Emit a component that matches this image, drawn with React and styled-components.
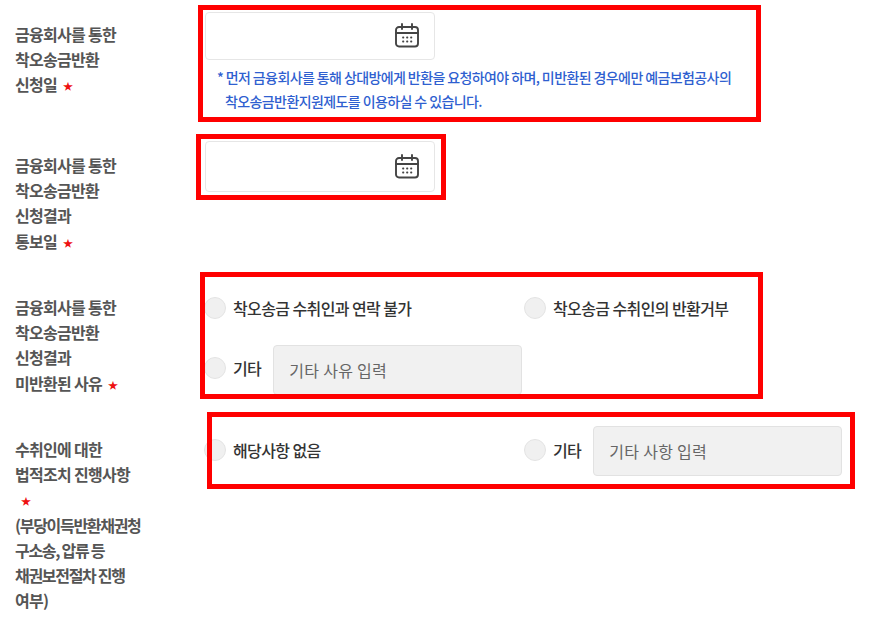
import React from 'react';
import styled, { createGlobalStyle } from 'styled-components';

const GlobalStyle = createGlobalStyle`
    html, body {
        margin: 0;
        padding: 0;
        background: #ffffff;
    }
    body {
        font-family: "Noto Sans CJK KR", "Noto Sans", sans-serif;
    }
`;

const Page = styled.div`
    width: 872px;
    height: 641px;
    overflow: hidden;
    box-sizing: border-box;
    padding-left: 15px;
`;

const Row = styled.div`
    position: relative;
    display: grid;
    grid-template-columns: 190px 1fr;
    height: ${(p) => p.$height}px;
`;

const Label = styled.div`
    width: 128px;
    padding-top: ${(p) => p.$top}px;
    font-size: 16px;
    font-weight: 700;
    line-height: ${(p) => p.$leading || 25.2}px;
    letter-spacing: -0.7px;
    color: #555555;
    word-break: keep-all;
`;

const Line = styled.div`
    white-space: nowrap;
    letter-spacing: ${(p) => (p.$tight ? '-1.3px' : 'inherit')};
`;

const Star = styled.span`
    color: #ee1111;
    font-size: 10px;
    vertical-align: 1px;
    margin-left: ${(p) => p.$left || 6}px;
`;

const Content = styled.div`
    padding-top: ${(p) => p.$top}px;
    display: flex;
    flex-direction: column;
    align-items: flex-start;
`;

const DateBox = styled.div`
    box-sizing: border-box;
    width: ${(p) => p.$width}px;
    height: ${(p) => p.$height}px;
    border: 1px solid #e6e6e6;
    border-radius: 4px;
    display: flex;
    align-items: center;
    justify-content: flex-end;
    padding-right: 14px;
    background: #ffffff;
`;

const Notice = styled.div`
    margin-top: 6px;
    padding-left: 12px;
    font-size: 14px;
    font-weight: 500;
    line-height: 23.5px;
    letter-spacing: -0.6px;
    color: #2f5fd0;
    white-space: nowrap;
`;

const NoticeSecond = styled.div`
    padding-left: 8px;
`;

const Options = styled.div`
    display: grid;
    grid-template-columns: 320px 1fr;
    row-gap: ${(p) => p.$gap || 0}px;
    align-items: start;
    width: 640px;
    margin-left: -1px;
`;

const Option = styled.label`
    display: flex;
    align-items: flex-start;
    height: ${(p) => p.$height || 25}px;
`;

const Radio = styled.span`
    flex: none;
    box-sizing: border-box;
    width: 22px;
    height: 22px;
    border-radius: 50%;
    background: #f0f0f0;
    border: 1px solid #e4e4e4;
    margin-right: 7px;
`;

const OptionText = styled.span`
    font-size: 16px;
    font-weight: 500;
    line-height: 22px;
    letter-spacing: -0.6px;
    color: #333333;
    white-space: nowrap;
`;

const FakeInput = styled.div`
    box-sizing: border-box;
    width: ${(p) => p.$width}px;
    height: 50px;
    margin-left: 12px;
    margin-top: ${(p) => p.$shift}px;
    flex: none;
    padding: 0 15px;
    display: flex;
    align-items: center;
    background: #f1f1f1;
    border: 1px solid #e2e2e2;
    border-radius: 4px;
    font-size: 16px;
    letter-spacing: 0.3px;
    color: #666666;
    white-space: nowrap;
`;

const Highlight = styled.div`
    position: absolute;
    box-sizing: border-box;
    left: ${(p) => p.$left}px;
    top: ${(p) => p.$top}px;
    width: ${(p) => p.$width}px;
    height: ${(p) => p.$height}px;
    border: 5px solid #ff0000;
    pointer-events: none;
`;

const CalendarIcon = () => (
    <svg width="26" height="26" viewBox="0 0 26 26" fill="none" stroke="#444444" strokeWidth="1.9" strokeLinecap="round">
        <rect x="2" y="4" width="22" height="19.5" rx="3" />
        <path d="M2 10H24" />
        <path d="M8 1V6M18 1V6" />
        <path d="M9 14.5H9.4M13 14.5H13.4M17 14.5H17.4M9 18.5H9.4M13 18.5H13.4M17 18.5H17.4" strokeWidth="1.8" />
    </svg>
);

const App = () => (
    <Page>
        <GlobalStyle />
        <Row $height={133}>
            <Label $top={22}>
                <Line>금융회사를 통한</Line>
                <Line>착오송금반환</Line>
                <Line>신청일<Star>★</Star></Line>
            </Label>
            <Content $top={12}>
                <DateBox $width={230} $height={48}><CalendarIcon /></DateBox>
                <Notice>
                    * 먼저 금융회사를 통해 상대방에게 반환을 요청하여야 하며, 미반환된 경우에만 예금보험공사의
                    <NoticeSecond>착오송금반환지원제도를 이용하실 수 있습니다.</NoticeSecond>
                </Notice>
            </Content>
            <Highlight $left={183} $top={5} $width={563} $height={117} />
        </Row>
        <Row $height={142}>
            <Label $top={20}>
                <Line>금융회사를 통한</Line>
                <Line>착오송금반환</Line>
                <Line>신청결과</Line>
                <Line>통보일<Star>★</Star></Line>
            </Label>
            <Content $top={8}>
                <DateBox $width={230} $height={51}><CalendarIcon /></DateBox>
            </Content>
            <Highlight $left={181} $top={1} $width={250} $height={66} />
        </Row>
        <Row $height={142}>
            <Label $top={20}>
                <Line>금융회사를 통한</Line>
                <Line>착오송금반환</Line>
                <Line>신청결과</Line>
                <Line>미반환된 사유<Star>★</Star></Line>
            </Label>
            <Content $top={22}>
                <Options $gap={35}>
                    <Option><Radio /><OptionText>착오송금 수취인과 연락 불가</OptionText></Option>
                    <Option><Radio /><OptionText>착오송금 수취인의 반환거부</OptionText></Option>
                    <Option>
                        <Radio /><OptionText>기타</OptionText>
                        <FakeInput $width={249} $shift={-12}>기타 사유 입력</FakeInput>
                    </Option>
                </Options>
            </Content>
            <Highlight $left={185} $top={-3} $width={563} $height={127} />
        </Row>
        <Row $height={224}>
            <Label $top={20} $leading={25}>
                <Line>수취인에 대한</Line>
                <Line>법적조치 진행사항</Line>
                <Line><Star $left={6}>★</Star></Line>
                <Line $tight>(부당이득반환채권청</Line>
                <Line $tight>구소송, 압류 등</Line>
                <Line $tight>채권보전절차 진행</Line>
                <Line>여부)</Line>
            </Label>
            <Content $top={22}>
                <Options>
                    <Option><Radio /><OptionText>해당사항 없음</OptionText></Option>
                    <Option>
                        <Radio /><OptionText>기타</OptionText>
                        <FakeInput $width={249} $shift={-13}>기타 사항 입력</FakeInput>
                    </Option>
                </Options>
            </Content>
            <Highlight $left={192} $top={-5} $width={648} $height={77} />
        </Row>
    </Page>
);

export default App;
